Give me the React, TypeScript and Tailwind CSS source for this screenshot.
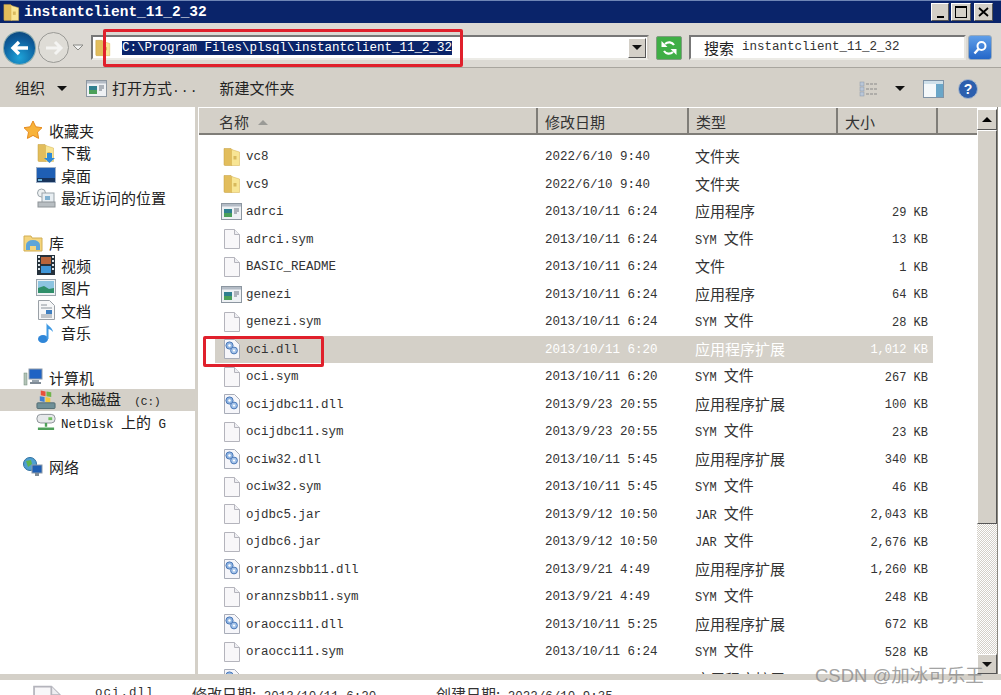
import { ReactNode } from 'react'

const cjk = 'font-["Noto_Sans_CJK_SC","Noto_Sans",sans-serif]'
const mono = 'font-["Liberation_Mono","Noto_Sans_CJK_SC",monospace]'

function FolderIcon({ size = 20, arrow = false }: { size?: number; arrow?: boolean }) {
  return (
    <svg width={size} height={size} viewBox="0 0 20 20">
      <path d="M2 1.5h7l1 1V18.5H3a1 1 0 0 1-1-1z" fill="#e2bd5c" stroke="#c39c3c" strokeWidth="0.5" />
      <path d="M9.5 2.5l8 2.5v13.5H9.5z" fill="#f8e594" stroke="#d4b04e" strokeWidth="0.5" />
      <path d="M11.5 9h3v3.5h-3z" fill="#d8b95c" />
      {arrow && <path d="M11 10h5v5h3l-5.5 5L8 15h3z" fill="#2f8ad8" />}
    </svg>
  )
}

function PageIcon({ size = 20 }: { size?: number }) {
  return (
    <svg width={size} height={size + 2} viewBox="0 0 20 22">
      <path d="M2.5 1.5h10l5 5v14h-15z" fill="#f8f7f9" stroke="#b4b4bc" />
      <path d="M12.5 1.5v5h5" fill="#eeeef2" stroke="#b4b4bc" />
    </svg>
  )
}

function DllIcon() {
  return (
    <svg width={20} height={22} viewBox="0 0 20 22">
      <path d="M2.5 1.5h10l5 5v14h-15z" fill="#f6f6fa" stroke="#a8acb8" />
      <circle cx="7.5" cy="7.5" r="3.6" fill="#8fb4e2" stroke="#4a78b8" />
      <circle cx="7.5" cy="7.5" r="1.2" fill="#fff" />
      <circle cx="12" cy="12.5" r="3.4" fill="#a6c4ea" stroke="#4a78b8" />
      <circle cx="12" cy="12.5" r="1.1" fill="#fff" />
    </svg>
  )
}

function AppIcon() {
  return (
    <svg width={21} height={17} viewBox="0 0 21 17">
      <rect x="0.5" y="0.5" width="20" height="16" fill="#eef1f4" stroke="#8c96a0" />
      <rect x="1" y="1" width="19" height="2.5" fill="#b4bcc6" />
      <rect x="3" y="6" width="8" height="8" fill="#2f7f8f" />
      <rect x="3" y="10" width="8" height="4" fill="#4ba05a" />
      <path d="M13 6h5M13 8h5M13 10h3" stroke="#6a7480" />
    </svg>
  )
}

type Row = { name: string; date: string; type: string; size: string; icon: 'folder' | 'page' | 'dll' | 'app'; selected?: boolean }

const rows: Row[] = [
  { name: 'vc8', date: '2022/6/10 9:40', type: '文件夹', size: '', icon: 'folder' },
  { name: 'vc9', date: '2022/6/10 9:40', type: '文件夹', size: '', icon: 'folder' },
  { name: 'adrci', date: '2013/10/11 6:24', type: '应用程序', size: '29 KB', icon: 'app' },
  { name: 'adrci.sym', date: '2013/10/11 6:24', type: 'SYM 文件', size: '13 KB', icon: 'page' },
  { name: 'BASIC_README', date: '2013/10/11 6:24', type: '文件', size: '1 KB', icon: 'page' },
  { name: 'genezi', date: '2013/10/11 6:24', type: '应用程序', size: '64 KB', icon: 'app' },
  { name: 'genezi.sym', date: '2013/10/11 6:24', type: 'SYM 文件', size: '28 KB', icon: 'page' },
  { name: 'oci.dll', date: '2013/10/11 6:20', type: '应用程序扩展', size: '1,012 KB', icon: 'dll', selected: true },
  { name: 'oci.sym', date: '2013/10/11 6:20', type: 'SYM 文件', size: '267 KB', icon: 'page' },
  { name: 'ocijdbc11.dll', date: '2013/9/23 20:55', type: '应用程序扩展', size: '100 KB', icon: 'dll' },
  { name: 'ocijdbc11.sym', date: '2013/9/23 20:55', type: 'SYM 文件', size: '23 KB', icon: 'page' },
  { name: 'ociw32.dll', date: '2013/10/11 5:45', type: '应用程序扩展', size: '340 KB', icon: 'dll' },
  { name: 'ociw32.sym', date: '2013/10/11 5:45', type: 'SYM 文件', size: '46 KB', icon: 'page' },
  { name: 'ojdbc5.jar', date: '2013/9/12 10:50', type: 'JAR 文件', size: '2,043 KB', icon: 'page' },
  { name: 'ojdbc6.jar', date: '2013/9/12 10:50', type: 'JAR 文件', size: '2,676 KB', icon: 'page' },
  { name: 'orannzsbb11.dll', date: '2013/9/21 4:49', type: '应用程序扩展', size: '1,260 KB', icon: 'dll' },
  { name: 'orannzsbb11.sym', date: '2013/9/21 4:49', type: 'SYM 文件', size: '248 KB', icon: 'page' },
  { name: 'oraocci11.dll', date: '2013/10/11 5:25', type: '应用程序扩展', size: '672 KB', icon: 'dll' },
  { name: 'oraocci11.sym', date: '2013/10/11 6:24', type: 'SYM 文件', size: '528 KB', icon: 'page' },
  { name: '', date: '', type: '应用程序扩展', size: '', icon: 'dll' },
]

function rowIcon(kind: Row['icon']) {
  if (kind === 'folder') return <FolderIcon />
  if (kind === 'app') return <AppIcon />
  if (kind === 'dll') return <DllIcon />
  return <PageIcon />
}

function NavItem({ icon, label, child, active }: { icon: ReactNode; label: ReactNode; child?: boolean; active?: boolean }) {
  return (
    <div className={`flex h-[22.5px] items-center ${child ? 'pl-[36px]' : 'pl-[23px]'} ${active ? 'bg-[#d4d0c8]' : ''}`}>
      <span className={`flex h-[20px] w-[20px] shrink-0 items-center justify-center ${child ? 'mr-[5px]' : 'mr-[6px]'}`}>{icon}</span>
      <span className={`${cjk} whitespace-pre text-[15px] leading-none text-[#222]`}>{label}</span>
    </div>
  )
}

function Caret() {
  return <span className="inline-block h-0 w-0 border-x-[5px] border-t-[5px] border-x-transparent border-t-[#111]" />
}

function HeaderCell({ width, children }: { width: string; children?: ReactNode }) {
  return (
    <div className={`flex h-full items-center border-r-2 border-r-[#7f7d78] pl-[7px] pt-[3px] ${width} ${cjk} text-[15px] text-[#333]`}>
      {children}
    </div>
  )
}

export default function App() {
  return (
    <div className={`relative flex h-[695px] w-[1001px] flex-col overflow-hidden bg-white ${cjk}`}>
      {/* Title bar */}
      <div className="flex h-[23px] shrink-0 items-center justify-between border-t border-t-[#6f86b5] bg-[#0a246a] pl-[2px] pr-[8px]">
        <div className="flex items-center gap-[3px]">
          <FolderIcon size={19} />
          <span className={`${mono} text-[14.5px] font-bold leading-none text-white`}>instantclient_11_2_32</span>
        </div>
        <div className="flex items-center gap-[2px]">
          <button className="flex h-[18px] w-[18px] items-end justify-center border border-[#fff] border-r-[#555] border-b-[#555] bg-[#d4d0c8] pb-[2px]">
            <span className="h-[2px] w-[7px] bg-black" />
          </button>
          <button className="flex h-[18px] w-[20px] items-center justify-center border border-[#fff] border-r-[#555] border-b-[#555] bg-[#d4d0c8]">
            <span className="h-[12px] w-[12px] border border-t-2 border-black" />
          </button>
          <button className="ml-[1px] flex h-[18px] w-[19px] items-center justify-center border border-[#fff] border-r-[#555] border-b-[#555] bg-[#d4d0c8]">
            <svg width="11" height="10" viewBox="0 0 11 10"><path d="M1 1l9 8M10 1l-9 8" stroke="#000" strokeWidth="1.8" /></svg>
          </button>
        </div>
      </div>

      {/* Address bar */}
      <div className="flex h-[45px] shrink-0 items-center border-b border-b-[#a8a59e] bg-[#dcd9d3] pl-[4px] pr-[8px] pt-[5px]">
        <div className="flex h-[32px] w-[31px] items-center justify-center rounded-full bg-[radial-gradient(circle_at_50%_80%,#1ea3d8,#0d5d9c_60%,#0b3f70)] shadow-[0_0_0_1px_#8aa]">
          <svg width="20" height="16" viewBox="0 0 20 16"><path d="M9 2L3 8l6 6M3 8h15" fill="none" stroke="#fff" strokeWidth="3.4" /></svg>
        </div>
        <div className="ml-[3px] flex h-[31px] w-[31px] items-center justify-center rounded-full border border-[#9a9a96] bg-[#dedcd6]">
          <svg width="20" height="16" viewBox="0 0 20 16"><path d="M11 2l6 6-6 6M17 8H2" fill="none" stroke="#f4f4f2" strokeWidth="3" /></svg>
        </div>
        <svg className="ml-[3px]" width="12" height="7" viewBox="0 0 12 7"><path d="M1 1h10L6 6z" fill="#f2f2f0" stroke="#8a8a86" /></svg>
        {/* Path field */}
        <div className="ml-[7px] flex h-[25px] w-[558px] items-center border-2 border-[#777] border-r-[#d4d0c8] border-b-[#ecebe6] bg-white pl-[1px] pr-[1px]">
          <FolderIcon size={18} />
          <span className={`ml-[10px] ${mono} bg-[#0a246a] text-[12.5px] leading-[14px] text-white`}>C:\Program Files\plsql\instantclient_11_2_32</span>
          <button className="ml-auto flex h-[20px] w-[18px] items-center justify-center border border-white border-r-[#555] border-b-[#555] bg-[#d4d0c8]">
            <Caret />
          </button>
        </div>
        <div className="ml-[7px] flex h-[24px] w-[26px] items-center justify-center rounded-[2px] border border-[#7f9c7f] bg-[#3fae46]">
          <svg width="20" height="18" viewBox="0 0 20 18">
            <path d="M15 6C13 3 9 2.500 6 5" fill="none" stroke="#fff" strokeWidth="2.2" />
            <path d="M8.500 8H2.500V2z" fill="#fff" />
            <path d="M5 12c2 3 6 3.500 9 1" fill="none" stroke="#fff" strokeWidth="2.2" />
            <path d="M11.500 10h6v6z" fill="#fff" />
          </svg>
        </div>
        <div className="ml-[7px] flex h-[25px] w-[277px] items-center border-2 border-[#777] border-r-[#e8e6e0] border-b-[#ecebe6] bg-white pl-[13px]">
          <span className="text-[15px] leading-none text-[#222]">搜索</span>
          <span className={`ml-[8px] ${mono} text-[12.5px] leading-none text-[#333]`}>instantclient_11_2_32</span>
        </div>
        <div className="ml-[2px] flex h-[25px] w-[24px] items-center justify-center rounded-[3px] border border-[#9ab] bg-[linear-gradient(#5f9ee8,#2467c8)]">
          <svg width="16" height="16" viewBox="0 0 16 16"><circle cx="9.5" cy="6" r="4" fill="none" stroke="#fff" strokeWidth="2" /><path d="M6.5 9L2.5 13.5" stroke="#fff" strokeWidth="2.4" /></svg>
        </div>
      </div>

      {/* Toolbar */}
      <div className="flex h-[39px] shrink-0 items-center bg-[#d4d0c8] pl-[15px] pr-[23px] pt-[2px] text-[15px] text-[#222]">
        <span>组织</span>
        <span className="ml-[12px] flex"><Caret /></span>
        <span className="ml-[19px]"><AppIcon /></span>
        <span className="ml-[5px]">打开方式</span>
        <span className={`${mono} text-[13px] tracking-[1px]`}>...</span>
        <span className="ml-[21px]">新建文件夹</span>
        <div className="ml-auto flex items-center">
          <svg width="19" height="16" viewBox="0 0 19 16">
            <g fill="#b9c6d8" stroke="#8a96a6" strokeWidth="0.5"><rect x="1" y="1" width="4" height="4" /><rect x="1" y="6" width="4" height="4" /><rect x="1" y="11" width="4" height="4" /></g>
            <path d="M7 3h11M7 8h11M7 13h11" stroke="#8a8a8a" strokeDasharray="3 1" />
          </svg>
          <span className="ml-[17px] flex"><Caret /></span>
          <svg className="ml-[18px]" width="21" height="18" viewBox="0 0 21 18">
            <rect x="0.5" y="0.5" width="20" height="17" fill="#f4f8fa" stroke="#7f93a6" />
            <rect x="1" y="1" width="19" height="3" fill="#cfe0ea" />
            <rect x="13" y="4" width="7" height="13" fill="#6aa6c8" />
          </svg>
          <svg className="ml-[14px]" width="20" height="20" viewBox="0 0 20 20">
            <circle cx="10" cy="10" r="9.5" fill="#2c5fae" stroke="#a9b8cc" />
            <text x="10" y="15" textAnchor="middle" fontSize="14" fontWeight="700" fill="#fff" fontFamily="Liberation Sans, sans-serif">?</text>
          </svg>
        </div>
      </div>

      {/* Main area */}
      <div className="flex min-h-0 flex-1 bg-white">
        {/* Navigation pane */}
        <nav className="w-[195px] shrink-0 pt-[12px]">
          <NavItem
            icon={<svg width="20" height="20" viewBox="0 0 20 20"><path d="M10 1l2.8 5.8 6.2.9-4.5 4.4 1.1 6.3L10 15.4l-5.6 3 1.1-6.3L1 7.7l6.2-.9z" fill="#f8b33a" stroke="#e58a1e" /></svg>}
            label="收藏夹"
          />
          <NavItem child icon={<FolderIcon size={20} arrow />} label="下载" />
          <NavItem
            child
            icon={<svg width="20" height="16" viewBox="0 0 20 16"><rect x="0.5" y="0.5" width="19" height="15" fill="#1f5fb4" stroke="#9db0c8" /><rect x="1" y="11" width="18" height="4" fill="#18345c" /><rect x="2" y="12" width="4" height="2" fill="#6fb6d8" /></svg>}
            label="桌面"
          />
          <NavItem
            child
            icon={<svg width="20" height="20" viewBox="0 0 20 20"><circle cx="5.5" cy="5" r="4" fill="#eef1f2" stroke="#9aa4aa" /><rect x="6" y="5" width="12" height="10" fill="#e8eef2" stroke="#9aa4aa" /><rect x="2" y="14" width="17" height="5" fill="#b8bec2" stroke="#8e9498" /><rect x="9" y="8" width="5" height="4" fill="#7fb0d0" /></svg>}
            label="最近访问的位置"
          />
          <div className="h-[22.5px]" />
          <NavItem
            icon={<svg width="20" height="20" viewBox="0 0 20 20"><path d="M1 3h7l1 2h10v13H1z" fill="#f4d57e" stroke="#d2ae52" /><path d="M3 17v-5a7 5 0 0 1 14 0v5h-4v-4H7v4z" fill="#5ea5d8" /></svg>}
            label="库"
          />
          <NavItem
            child
            icon={<svg width="18" height="20" viewBox="0 0 18 20"><rect width="18" height="20" fill="#26323c" /><rect x="4" y="2" width="10" height="7" fill="#b8643a" /><rect x="4" y="11" width="10" height="7" fill="#3f96d8" /><path d="M1 2h2M1 6h2M1 10h2M1 14h2M15 2h2M15 6h2M15 10h2M15 14h2" stroke="#dfe6ea" strokeWidth="2" /></svg>}
            label="视频"
          />
          <NavItem
            child
            icon={<svg width="20" height="17" viewBox="0 0 20 17"><rect x="0.5" y="0.5" width="19" height="16" fill="#eef2f4" stroke="#9aa4ac" /><rect x="2" y="2" width="16" height="8" fill="#8cc4e0" /><path d="M2 14V9l6-2 5 3 5-1v5z" fill="#2f8f6a" /></svg>}
            label="图片"
          />
          <NavItem
            child
            icon={<svg width="17" height="20" viewBox="0 0 17 20"><path d="M0.5 0.5h11l5 5v14h-16z" fill="#f6f7f8" stroke="#9aa0a6" /><path d="M3 5h6M3 8h11M3 15h11M3 17h11" stroke="#8a929a" /><rect x="8" y="10" width="6" height="4" fill="#3f7fc0" /></svg>}
            label="文档"
          />
          <NavItem
            child
            icon={<svg width="18" height="22" viewBox="0 0 18 22"><ellipse cx="6" cy="17" rx="5" ry="4" fill="#2f86d8" /><path d="M9.500 17V1c1 3 6 4 6.500 9-1.500-2-3.500-3-4.500-3v10z" fill="#3f9ae4" /></svg>}
            label="音乐"
          />
          <div className="h-[22px]" />
          <NavItem
            icon={<svg width="20" height="18" viewBox="0 0 20 18"><rect x="6" y="1" width="13" height="10" fill="#1f63c4" stroke="#8d9aa8" /><rect x="9" y="12" width="7" height="2" fill="#98a4ae" /><rect x="7" y="14" width="11" height="2" fill="#7f8b96" /><rect x="1" y="5" width="3" height="12" fill="#b4c4b8" stroke="#6f8a78" strokeWidth="0.5" /></svg>}
            label="计算机"
          />
          <NavItem
            active
            child
            icon={<svg width="21" height="21" viewBox="0 0 21 21"><path d="M5 1l5 1v5l-5-1z" fill="#e8503a" /><path d="M11 2l5 1v5l-5-1z" fill="#6fb44a" /><path d="M4 7l5 1v5l-5-1z" fill="#3f7fd0" /><path d="M10 8l5 1v5l-5-1z" fill="#f4c83a" /><rect x="1" y="14" width="19" height="6" rx="1" fill="#6f9098" stroke="#4f6a72" /></svg>}
            label={<>本地磁盘<span className={`${mono} text-[11px]`}>  (C:)</span></>}
          />
          <NavItem
            child
            icon={<svg width="21" height="19" viewBox="0 0 21 19"><rect x="1" y="1" width="19" height="9" rx="4" fill="#e6e8ea" stroke="#8a9096" /><rect x="13" y="4" width="4" height="3" fill="#6fbf5f" /><path d="M10.500 10v4M2 16h17" stroke="#4fa05a" strokeWidth="2.500" /></svg>}
            label={<><span className={`${mono} text-[12.5px]`}>NetDisk </span>上的<span className={`${mono} text-[12.5px]`}> G</span></>}
          />
          <div className="h-[22px]" />
          <NavItem
            icon={<svg width="20" height="20" viewBox="0 0 20 20"><circle cx="7" cy="7" r="6.5" fill="#4f9fd0" stroke="#2f6f9f" /><path d="M3 4l5-1 1 4-4 3z" fill="#5fb44f" /><rect x="9" y="8" width="10" height="8" fill="#1f5fb4" stroke="#8d9aa8" /><rect x="12" y="16" width="4" height="3" fill="#7f8b96" /></svg>}
            label="网络"
          />
        </nav>

        {/* Splitter */}
        <div className="w-[3px] shrink-0 bg-[#d4d0c8]" />

        {/* File list */}
        <div className="flex min-w-0 flex-1 bg-white pl-[1px]">
          <div className="flex min-w-0 flex-1 flex-col overflow-hidden">
            <div className="flex h-[28px] shrink-0 border-t border-t-white border-b-2 border-b-[#7f7d78] bg-[#d4d0c8]">
              <div className={`flex h-full w-[339px] items-center border-r-2 border-r-[#7f7d78] pl-[20px] pt-[3px] ${cjk} text-[15px] text-[#333]`}>
                名称
                <span className="ml-[9px] inline-block h-0 w-0 border-x-[5px] border-b-[5px] border-x-transparent border-b-[#9a9a96]" />
              </div>
              <HeaderCell width="w-[151px]">修改日期</HeaderCell>
              <HeaderCell width="w-[149px]">类型</HeaderCell>
              <HeaderCell width="w-[100px]">大小</HeaderCell>
              <div className="flex-1" />
            </div>
            <div className="overflow-hidden pt-[8px]">
              {rows.map((r, i) => (
                <div
                  key={i}
                  className={`ml-[16px] flex h-[27.5px] w-[718px] items-center ${r.selected ? 'bg-[#d4d0c8] text-white' : 'text-[#333]'}`}
                >
                  <span className="flex w-[31px] shrink-0 items-center justify-center pl-[2px]">{rowIcon(r.icon)}</span>
                  <span className={`w-[299px] shrink-0 pt-[2px] ${mono} text-[12.5px] ${r.selected ? 'text-[#333]' : ''}`}>{r.name}</span>
                  <span className={`w-[150px] shrink-0 pt-[2px] ${mono} text-[12.5px]`}>{r.date}</span>
                  <span className="w-[120px] shrink-0 whitespace-pre pb-[2px] text-[15px] leading-none">
                    {r.type.split(/(?=文件)/).map((part, j) =>
                      /^[A-Z]/.test(part) ? <span key={j} className={`${mono} text-[12px]`}>{part}</span> : <span key={j}>{part}</span>,
                    )}
                  </span>
                  <span className={`flex-1 whitespace-pre pr-[5px] pt-[2px] text-right ${mono} text-[12px]`}>{r.size}</span>
                </div>
              ))}
            </div>
          </div>

          {/* Scrollbar */}
          <div className="mt-[2px] flex w-[20px] shrink-0 flex-col bg-[repeating-conic-gradient(#d4d0c8_0_25%,#fff_0_50%)] bg-[length:2px_2px]">
            <div className="flex h-[21px] shrink-0 items-center justify-center border border-white border-r-[#555] border-b-[#555] bg-[#d4d0c8]">
              <span className="inline-block h-0 w-0 border-x-[5px] border-b-[5px] border-x-transparent border-b-black" />
            </div>
            <div className="h-[394px] shrink-0 border border-white border-r-[#555] border-b-[#555] bg-[#d4d0c8]" />
            <div className="flex-1" />
            <div className="flex h-[20px] shrink-0 items-center justify-center border border-white border-r-[#555] border-b-[#555] bg-[#d4d0c8]">
              <Caret />
            </div>
          </div>
          <div className="w-[4px] shrink-0 border-l border-l-[#8a8880] bg-white" />
        </div>
      </div>

      {/* Details pane */}
      <div className="h-[6px] shrink-0 bg-[#d4d0c8]" />
      <div className="relative flex h-[15px] shrink-0 items-start overflow-hidden bg-white pl-[29px] text-[#333]">
        <span className="mt-[4px] shrink-0"><PageIcon size={36} /></span>
        <span className={`ml-[30px] mt-[6px] w-[97px] shrink-0 ${mono} text-[12.5px] leading-[14px] tracking-[1px]`}>oci.dll</span>
        <span className="mt-[6px] w-[244px] shrink-0 whitespace-pre text-[15px] leading-[15px]">
          修改日期:<span className={`${mono} text-[12.5px]`}> 2013/10/11 6:20</span>
        </span>
        <span className="mt-[6px] whitespace-pre text-[15px] leading-[15px]">
          创建日期:<span className={`${mono} text-[12.5px]`}> 2022/6/10 9:35</span>
        </span>
      </div>

      {/* Annotations drawn on top of the screenshot */}
      <div className="pointer-events-none absolute left-[103px] top-[29px] h-[38px] w-[360px] rounded-[2px] border-[3px] border-[#e0202c]" />
      <div className="pointer-events-none absolute left-[203px] top-[336px] h-[31px] w-[121px] rounded-[2px] border-[3px] border-[#e0202c]" />
      <div className="pointer-events-none absolute left-[815px] top-[662px] whitespace-pre text-[18.5px] leading-[24px] text-[#8a8a8a]/80">
        <span className='font-["Liberation_Sans",sans-serif]'>CSDN @</span>加冰可乐王
      </div>
    </div>
  )
}
